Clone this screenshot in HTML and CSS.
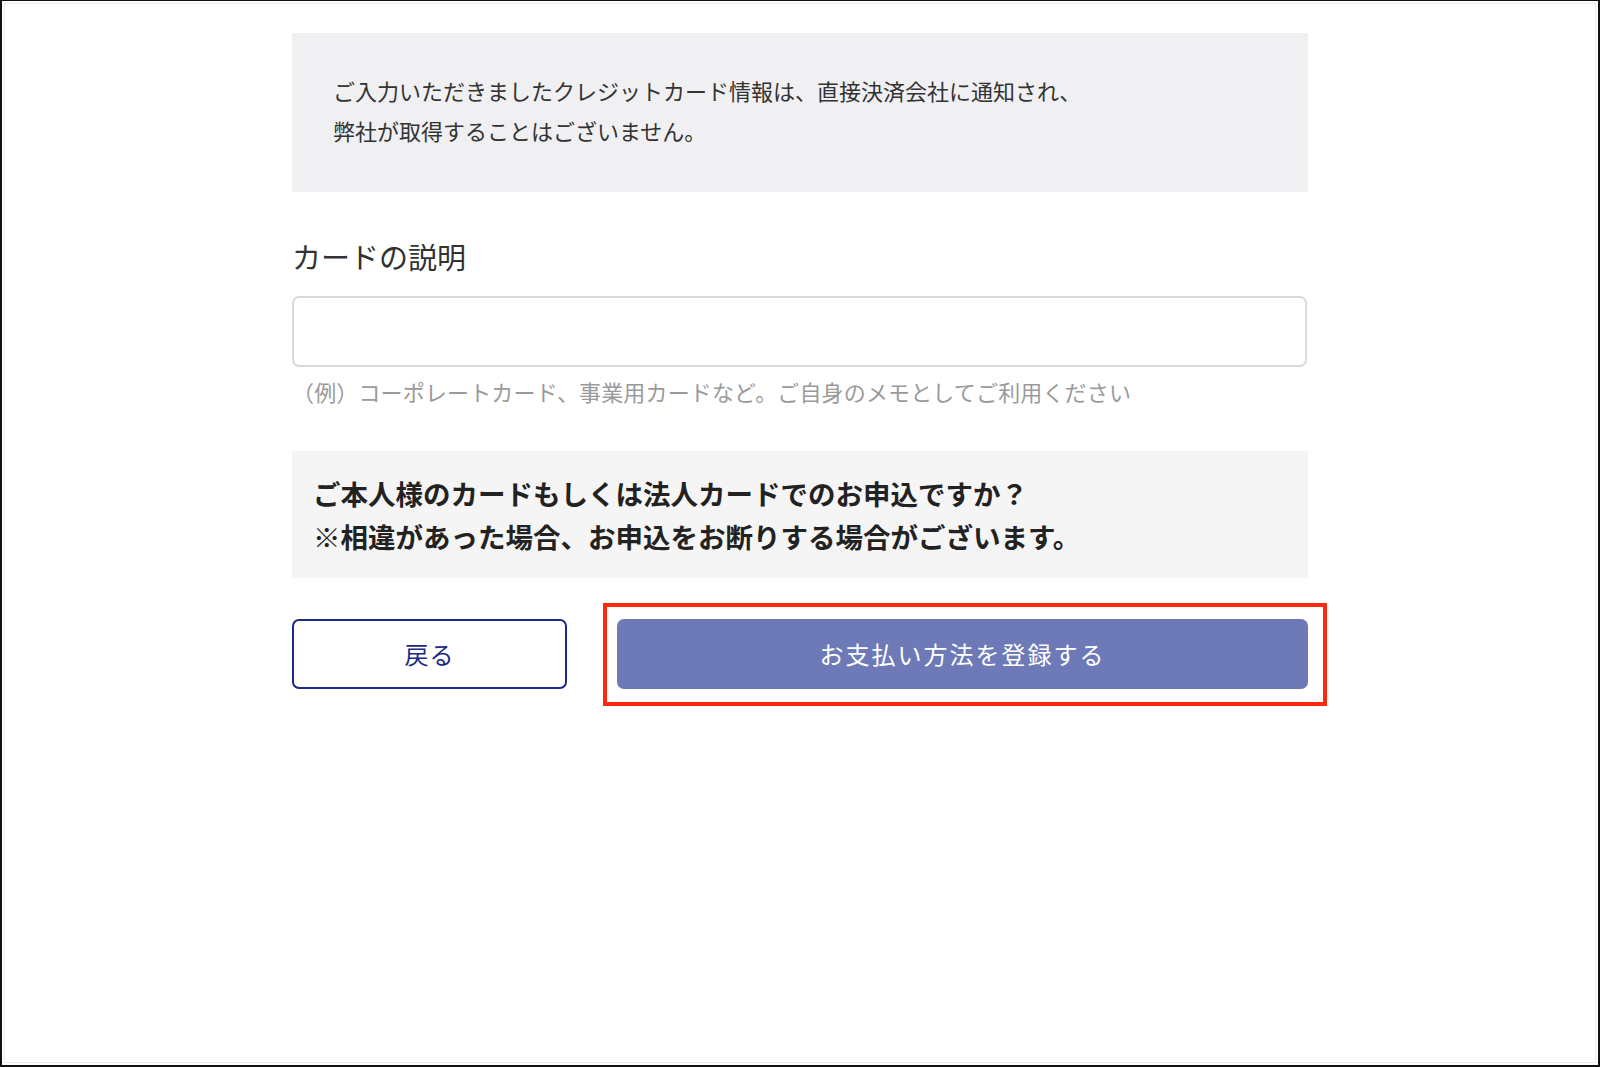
FILE: index.html
```html
<!DOCTYPE html>
<html lang="ja">
<head>
    <meta charset="UTF-8">
    <meta name="viewport" content="width=device-width, initial-scale=1.0">
    <title>お支払い方法の登録</title>
    <link rel="stylesheet" href="styles.css">
</head>
<body>
    <div class="frame">
        <div class="container">
            <div class="notice">
                <p>ご入力いただきましたクレジットカード情報は、直接決済会社に通知され、<br>弊社が取得することはございません。</p>
            </div>

            <div class="form-group">
                <label for="card_memo">カードの説明</label>
                <input type="text" id="card_memo" name="card_memo">
                <p class="hint">（例）コーポレートカード、事業用カードなど。ご自身のメモとしてご利用ください</p>
            </div>

            <div class="confirm">
                <p>ご本人様のカードもしくは法人カードでのお申込ですか？<br>※相違があった場合、お申込をお断りする場合がございます。</p>
            </div>

            <div class="actions">
                <button type="button" class="btn-back">戻る</button>
                <div class="submit-wrap">
                    <button type="submit" class="btn-submit">お支払い方法を登録する</button>
                    <span class="highlight"></span>
                </div>
            </div>
        </div>
    </div>
</body>
</html>
```

FILE: styles.css
```css
* {
    box-sizing: border-box;
}

body {
    margin: 0;
    font-family: "Noto Sans CJK JP", "Noto Sans", sans-serif;
    color: #333;
    background: #fff;
}

.frame {
    width: 1600px;
    height: 1067px;
    border: 2px solid #111;
    border-top-width: 1px;
    box-shadow: inset 0 0 0 2px #fff, inset 0 0 0 3px #ececec; /* linea gris interior */
    padding-top: 32px;
}

.container {
    width: 1016px;
    margin: 0 auto;
}

p {
    margin: 0;
}

.notice {
    background-color: #f0f0f2;
    padding: 37px 41px 42px;
    font-size: 22px;
    line-height: 40px;
    color: #333;
}

.form-group {
    margin-top: 44px;
}

label {
    display: block;
    font-size: 29px;
    line-height: 40px;
    color: #333;
    margin-bottom: 20px;
}

input[type="text"] {
    display: block;
    width: 1015px;
    height: 71px;
    border: 2px solid #d6d9de;
    border-radius: 7px;
    background: #fff;
    font-size: 22px;
    padding: 0 20px;
}

input[type="text"]:focus {
    outline: none;
    border-color: #6e7ab7;
}

.hint {
    margin-top: 9px;
    font-size: 22px;
    line-height: 30px;
    letter-spacing: 0.15px;
    color: #9a9a9a;
}

.confirm {
    margin-top: 45px;
    background-color: #f5f5f5;
    padding: 21px 21px 20px;
    font-size: 27.5px;
    line-height: 43px;
    font-weight: bold;
    color: #222;
}

.actions {
    margin-top: 41px;
    display: flex;
    gap: 50px;
}

.btn-back,
.btn-submit {
    height: 70px;
    border-radius: 7px;
    font-family: inherit;
    font-size: 24px;
    letter-spacing: 1px;
    padding-bottom: 3px;
    cursor: pointer;
}

.btn-back {
    width: 275px;
    background: #fff;
    border: 2px solid #1b2a87;
    color: #1b2a87;
}

.submit-wrap {
    position: relative;
    width: 691px;
}

.btn-submit {
    width: 100%;
    background-color: #6e7ab7;
    border: none;
    color: #fff;
    letter-spacing: 2px;
}

/* marco rojo de anotacion sobre el boton */
.highlight {
    position: absolute;
    left: -14px;
    top: -16px;
    right: -19px;
    bottom: -17px;
    border: 4px solid #ff2a0e;
    pointer-events: none;
}
```
